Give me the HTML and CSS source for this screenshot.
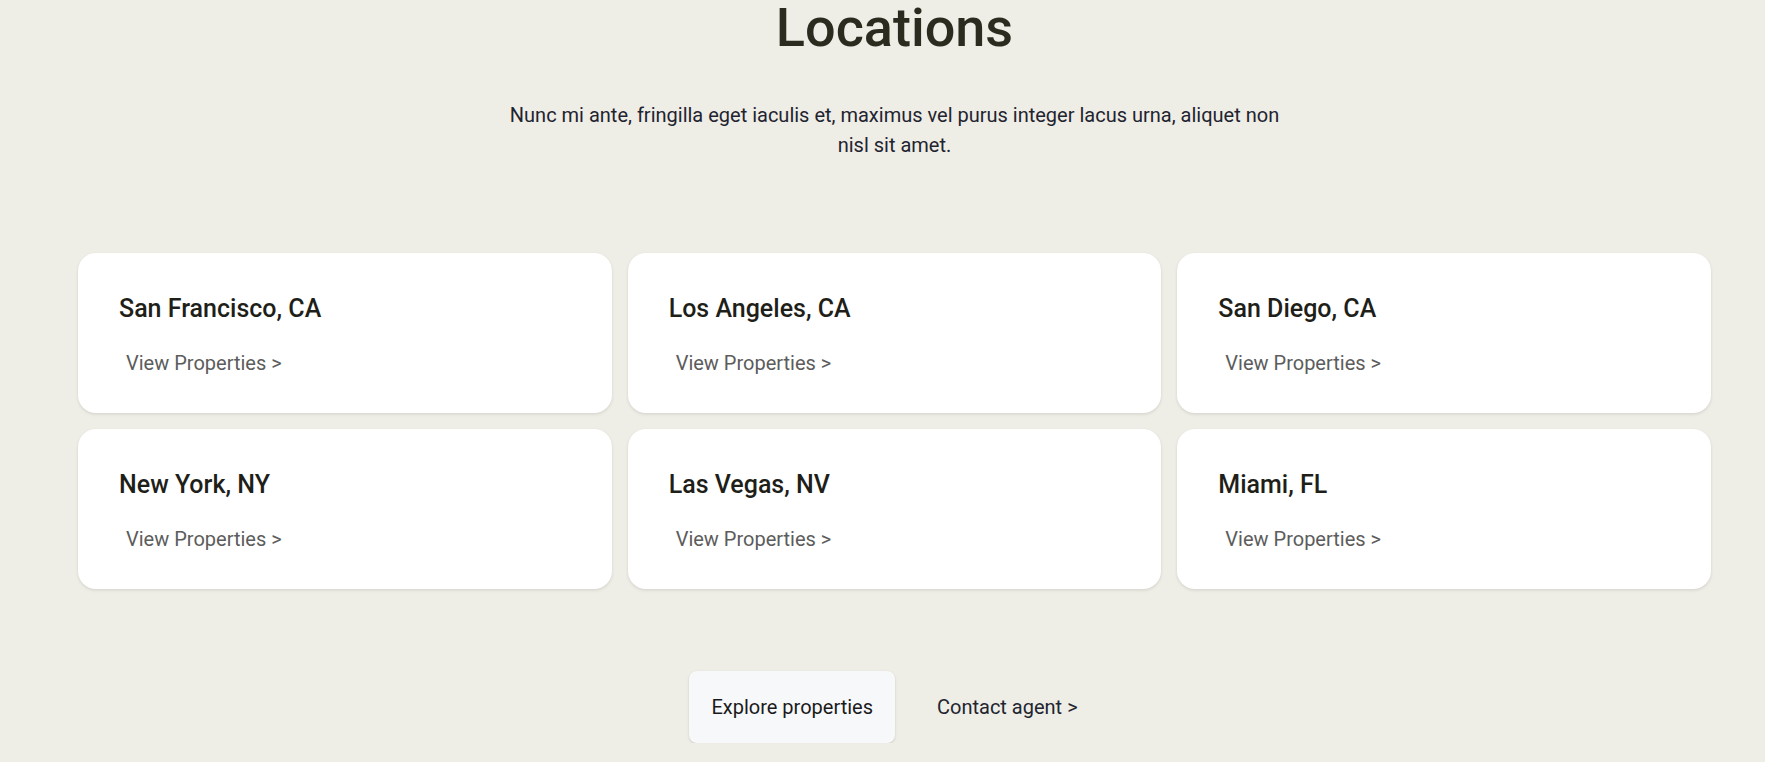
FILE: index.html
```html
<!DOCTYPE html>
<html lang="en">
<head>
<meta charset="utf-8">
<title>Locations</title>
<link rel="stylesheet" href="styles.css">
</head>
<body>
<main class="page">
  <section class="locations">
    <header class="intro">
      <h1 class="intro-title">Locations</h1>
      <p class="intro-text">Nunc mi ante, fringilla eget iaculis et, maximus vel purus integer lacus urna, aliquet non nisl sit amet.</p>
    </header>
    <div class="grid">
      <article class="card">
        <h2 class="card-title">San Francisco, CA</h2>
        <a class="card-link" href="#">View Properties &gt;</a>
      </article>
      <article class="card">
        <h2 class="card-title">Los Angeles, CA</h2>
        <a class="card-link" href="#">View Properties &gt;</a>
      </article>
      <article class="card">
        <h2 class="card-title">San Diego, CA</h2>
        <a class="card-link" href="#">View Properties &gt;</a>
      </article>
      <article class="card">
        <h2 class="card-title">New York, NY</h2>
        <a class="card-link" href="#">View Properties &gt;</a>
      </article>
      <article class="card">
        <h2 class="card-title">Las Vegas, NV</h2>
        <a class="card-link" href="#">View Properties &gt;</a>
      </article>
      <article class="card">
        <h2 class="card-title">Miami, FL</h2>
        <a class="card-link" href="#">View Properties &gt;</a>
      </article>
    </div>
    <div class="actions">
      <a class="btn btn-primary" href="#">Explore properties</a>
      <a class="btn btn-link" href="#">Contact agent &gt;</a>
    </div>
  </section>
</main>
</body>
</html>
```
FILE: styles.css
```css
* { box-sizing: border-box; }

html, body {
  margin: 0;
  padding: 0;
  background: #eeede6;
}

body {
  font-family: Roboto, "Liberation Sans", sans-serif;
  color: #222222;
}

.page {
  padding: 0 54px 0 78px;
}

.locations {
  display: flex;
  flex-direction: column;
  align-items: center;
}

.intro {
  display: flex;
  flex-direction: column;
  align-items: center;
  text-align: center;
}

.intro-title {
  margin: 0;
  font-size: 54px;
  line-height: 56px;
  font-weight: 500;
  color: #2b2b20;
}

.intro-text {
  margin: 44px 0 0;
  max-width: 790px;
  font-size: 20px;
  line-height: 30px;
  color: #1f2430;
}

.grid {
  margin-top: 93px;
  width: 100%;
  display: grid;
  grid-template-columns: repeat(3, 1fr);
  gap: 16px;
}

.card {
  height: 160px;
  background: #ffffff;
  border-radius: 18px;
  padding: 40px 41px 0;
  box-shadow: 0 1px 3px rgba(0, 0, 0, 0.08), 0 2px 4px rgba(0, 0, 0, 0.04);
  display: flex;
  flex-direction: column;
  align-items: flex-start;
}

.card-title {
  margin: 0;
  font-size: 25px;
  line-height: 32px;
  font-weight: 500;
  color: #1f1f1a;
}

.card-link {
  margin-top: 19px;
  padding: 4px 7px;
  font-size: 20px;
  line-height: 30px;
  color: #5c5c5c;
  text-decoration: none;
}

.actions {
  margin-top: 82px;
  display: flex;
  gap: 20px;
  align-items: center;
}

.btn {
  padding: 24px 22px;
  font-size: 20px;
  line-height: 24px;
  text-decoration: none;
  color: #1a1a1a;
  border-radius: 8px;
}

.btn-primary {
  background: #f7f8fa;
  box-shadow: 0 1px 3px rgba(0, 0, 0, 0.1), 0 1px 2px rgba(0, 0, 0, 0.05);
}

.btn-link {
  color: #222530;
}
```
